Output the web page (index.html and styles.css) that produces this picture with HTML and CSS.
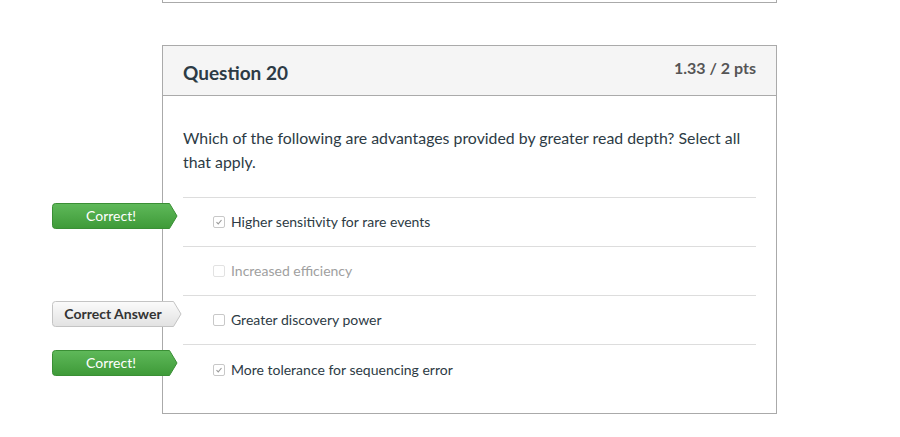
FILE: index.html
```html
<!DOCTYPE html>
<html>
<head>
<meta charset="utf-8">
<link rel="stylesheet" href="styles.css">
</head>
<body>
<div class="page">
  <div class="prev-card"></div>
  <div class="card">
    <div class="card-header">
      <h2 class="q-title">Question 20</h2>
      <div class="q-points">1.33 / 2 pts</div>
    </div>
    <div class="card-body">
      <p class="q-text">Which of the following are advantages provided by greater read depth? Select all that apply.</p>
      <div class="answers">
        <div class="answer">
          <div class="flag flag-green">
            <svg class="flag-shape" width="126" height="26" viewBox="0 0 126 26"><defs><linearGradient id="g1" x1="0" y1="0" x2="0" y2="1"><stop offset="0" stop-color="#5fb95a"/><stop offset="1" stop-color="#3e9a38"/></linearGradient></defs><path d="M3.5 0.5 H117.5 L125 13 L117.5 25.5 H3.5 Q0.5 25.5 0.5 22.5 V3.5 Q0.5 0.5 3.5 0.5 Z" fill="url(#g1)" stroke="#3a8f35" stroke-width="1"/></svg>
            <span class="flag-text">Correct!</span>
          </div>
          <span class="cb checked"><svg width="12" height="12" viewBox="0 0 12 12"><path d="M3 6.2 L5.1 8.3 L9 3.6" fill="none" stroke="#999" stroke-width="1.3"/></svg></span>
          <span class="a-text">Higher sensitivity for rare events</span>
        </div>
        <div class="answer">
          <span class="cb faded"></span>
          <span class="a-text muted">Increased efficiency</span>
        </div>
        <div class="answer">
          <div class="flag flag-gray">
            <svg class="flag-shape" width="130" height="26" viewBox="0 0 130 26"><defs><linearGradient id="g2" x1="0" y1="0" x2="0" y2="1"><stop offset="0" stop-color="#fbfbfb"/><stop offset="1" stop-color="#e2e2e2"/></linearGradient></defs><path d="M3.5 0.5 H121.5 L129 13 L121.5 25.5 H3.5 Q0.5 25.5 0.5 22.5 V3.5 Q0.5 0.5 3.5 0.5 Z" fill="url(#g2)" stroke="#c4c4c4" stroke-width="1"/></svg>
            <span class="flag-text dark">Correct Answer</span>
          </div>
          <span class="cb"></span>
          <span class="a-text">Greater discovery power</span>
        </div>
        <div class="answer">
          <div class="flag flag-green">
            <svg class="flag-shape" width="126" height="26" viewBox="0 0 126 26"><defs><linearGradient id="g3" x1="0" y1="0" x2="0" y2="1"><stop offset="0" stop-color="#5fb95a"/><stop offset="1" stop-color="#3e9a38"/></linearGradient></defs><path d="M3.5 0.5 H117.5 L125 13 L117.5 25.5 H3.5 Q0.5 25.5 0.5 22.5 V3.5 Q0.5 0.5 3.5 0.5 Z" fill="url(#g3)" stroke="#3a8f35" stroke-width="1"/></svg>
            <span class="flag-text">Correct!</span>
          </div>
          <span class="cb checked"><svg width="12" height="12" viewBox="0 0 12 12"><path d="M3 6.2 L5.1 8.3 L9 3.6" fill="none" stroke="#999" stroke-width="1.3"/></svg></span>
          <span class="a-text">More tolerance for sequencing error</span>
        </div>
      </div>
    </div>
  </div>
</div>
</body>
</html>
```

FILE: styles.css
```css
* { box-sizing: border-box; }
body {
  margin: 0;
  background: #fff;
  font-family: Lato, "Open Sans", sans-serif;
  color: #2d3b45;
}
.page {
  margin-left: 162px;
  width: 615px;
}
.prev-card {
  height: 3px;
  border: 1px solid #aaa;
  border-top: none;
}
.card {
  margin-top: 42px;
  border: 1px solid #aaa;
  background: #fff;
}
.card-header {
  height: 50px;
  background: #f5f5f5;
  border-bottom: 1px solid #aaa;
  display: flex;
  justify-content: space-between;
  align-items: flex-start;
  padding: 0 20px;
}
.q-title {
  margin: 15px 0 0;
  font-size: 19px;
  font-weight: 700;
  line-height: 24px;
  color: #2d3b45;
}
.q-points {
  margin-top: 10px;
  font-size: 16px;
  font-weight: 700;
  line-height: 24px;
  color: #555;
}
.card-body {
  padding: 30px 20px 19px;
}
.q-text {
  margin: 0 0 23px;
  font-size: 15.85px;
  line-height: 24px;
}
.answers {
  border-top: 1px solid #ddd;
}
.answer {
  position: relative;
  height: 49px;
  border-bottom: 1px solid #ddd;
  display: flex;
  align-items: center;
  padding-left: 30px;
  padding-bottom: 0;
}
.answer:last-child { border-bottom: none; }
.cb {
  width: 12px;
  height: 12px;
  border: 1px solid #c8c8c8;
  border-radius: 2px;
  background: #fff;
  display: inline-flex;
  align-items: center;
  justify-content: center;
  margin-right: 6px;
  flex: none;
}
.cb svg { display: block; }
.cb.faded { border-color: #e2e2e2; }
.a-text {
  font-size: 14px;
  line-height: 18px;
}
.a-text.muted { color: #a0a0a0; }
.flag {
  position: absolute;
  left: -131px;
  top: 5px;
  height: 26px;
  display: flex;
  align-items: center;
}
.flag-shape {
  position: absolute;
  left: 0;
  top: 0;
}
.flag-green { width: 126px; }
.flag-gray { width: 130px; }
.flag-text {
  position: relative;
  width: 118px;
  text-align: center;
  font-size: 14px;
  color: #fff;
  line-height: 26px;
}
.flag-text.dark {
  width: 122px;
  color: #333;
  font-weight: 700;
}
```
